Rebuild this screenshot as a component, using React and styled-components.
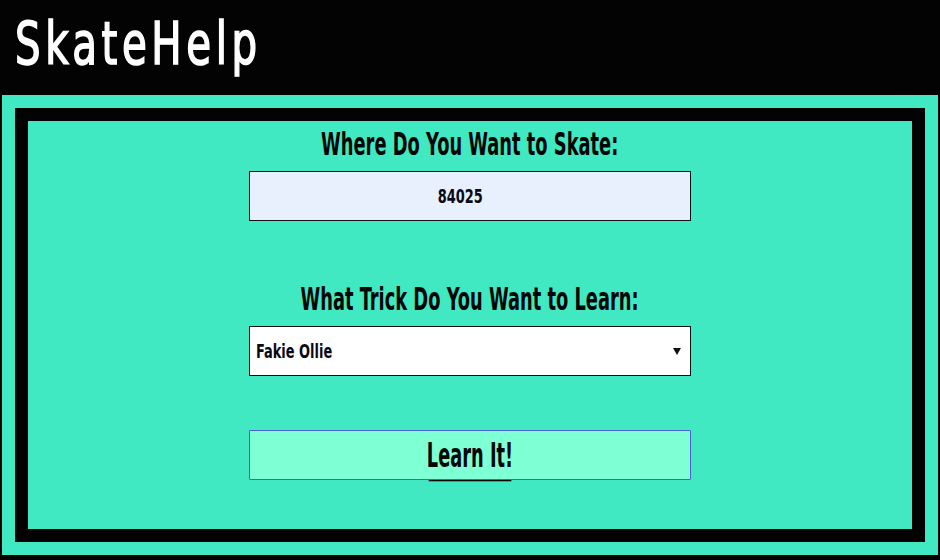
import React from "react";
import styled, { createGlobalStyle } from "styled-components";

const GlobalStyle = createGlobalStyle`
  html, body {
    margin: 0;
    padding: 0;
    background: #030303;
    width: 940px;
    height: 560px;
    overflow: hidden;
  }
  * { box-sizing: border-box; }
`;

const FONT = `"DejaVu Sans Condensed", "DejaVu Sans", sans-serif`;

const Page = styled.div`
  width: 940px;
  height: 560px;
  display: flex;
  flex-direction: column;
  background: #030303;
`;

const Header = styled.header`
  height: 95px;
  display: flex;
  align-items: center;
  padding-left: 15px;
`;

const Squeeze = styled.span`
  display: inline-block;
  white-space: nowrap;
  transform: scaleX(${(p) => p.$sx});
  transform-origin: ${(p) => p.$origin || "center"};
`;

const Title = styled.h1`
  margin: 0;
  font-family: ${FONT};
  font-weight: 400;
  font-size: 59px;
  letter-spacing: 6px;
  color: #ffffff;
  -webkit-text-stroke: 1.6px #ffffff;
  line-height: 1;
  transform: translateY(-4px);
`;

const Main = styled.main`
  margin: 0 2px;
  height: 460px;
  padding: 13px;
  background: #40e9c1;
`;

const Frame = styled.section`
  height: 100%;
  border: 13px solid #030303;
  background: #40e9c1;
  display: flex;
  flex-direction: column;
  align-items: center;
  padding-top: 3px;
`;

const Label = styled.label`
  font-family: ${FONT};
  font-weight: 700;
  font-size: 32px;
  line-height: 40px;
  height: 40px;
  color: #050505;
  text-align: center;
  margin-top: ${(p) => p.$top || 0}px;
`;

const Field = styled.div`
  width: 442px;
  height: 50px;
  margin-top: 7px;
  border: 1px solid #111;
  background: ${(p) => p.$bg};
  display: flex;
  align-items: center;
  font-family: ${FONT};
  font-weight: 700;
  color: #0a0a14;
`;

const ZipText = styled.span`
  flex: 1;
  text-align: center;
  font-size: 20px;
  padding-right: 19px;
`;

const SelectText = styled.span`
  flex: 1;
  padding-left: 6px;
  font-size: 20px;
`;

const Arrow = styled.span`
  width: 10px;
  margin-right: 8px;
  display: flex;
  justify-content: center;
`;

const ButtonWrap = styled.div`
  margin-top: 54px;
  position: relative;
`;

const Button = styled.button`
  width: 442px;
  height: 50px;
  border: 1px solid #4a62d8;
  border-radius: 1px;
  background: #7fffd4;
  font-family: ${FONT};
  font-weight: 700;
  font-size: 33px;
  color: #050505;
  cursor: pointer;
  padding: 0;
`;

const Underline = styled.span`
  position: absolute;
  left: 179px;
  width: 84px;
  bottom: -2px;
  height: 2px;
  background: #050505;
  border: 1px solid #4a8ad8;
  border-top: none;
  border-radius: 0 0 2px 2px;
`;

export default function App() {
  return (
    <>
      <GlobalStyle />
      <Page>
        <Header>
          <Title>
            <Squeeze $sx={0.76} $origin="left">SkateHelp</Squeeze>
          </Title>
        </Header>
        <Main>
          <Frame>
            <Label>
              <Squeeze $sx={0.62}>Where Do You Want to Skate:</Squeeze>
            </Label>
            <Field $bg="#e8f0fe">
              <ZipText>
                <Squeeze $sx={0.72}>84025</Squeeze>
              </ZipText>
            </Field>
            <Label $top={58}>
              <Squeeze $sx={0.62}>What Trick Do You Want to Learn:</Squeeze>
            </Label>
            <Field $bg="#ffffff">
              <SelectText>
                <Squeeze $sx={0.72} $origin="left">Fakie Ollie</Squeeze>
              </SelectText>
              <Arrow>
                <svg width="8" height="7" viewBox="0 0 8 7">
                  <path d="M0 0 H8 L4 7 Z" fill="#111" />
                </svg>
              </Arrow>
            </Field>
            <ButtonWrap>
              <Button>
                <Squeeze $sx={0.6}>Learn It!</Squeeze>
              </Button>
              <Underline />
            </ButtonWrap>
          </Frame>
        </Main>
      </Page>
    </>
  );
}
